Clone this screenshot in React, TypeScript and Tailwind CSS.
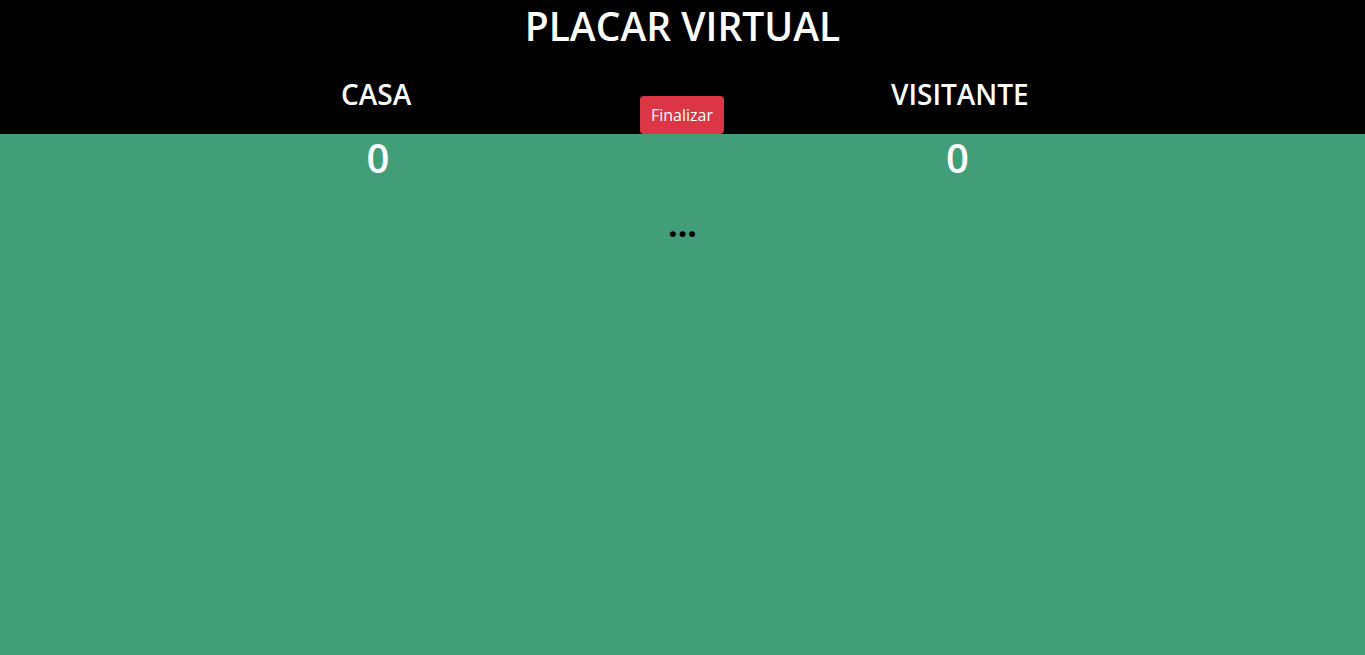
export default function App() {
	return (
		<div
			className="min-h-screen bg-[#429e78] text-white"
			style={{ fontFamily: '"Open Sans", "Noto Sans", sans-serif' }}
		>
			{/* Header */}
			<div className="h-[134px] bg-black">
				<h1 className="text-center text-[39px] font-semibold leading-[51px]">PLACAR VIRTUAL</h1>
				<div className="mt-[26px] flex items-start justify-center">
					<div className="w-[70px] text-center text-[28px] font-semibold leading-[34px]">CASA</div>
					<div className="w-[229px]" />
					<button className="mt-[19px] h-[38px] w-[84px] rounded-[4px] bg-[#dc3545] text-[16px] leading-[24px] text-white">
						Finalizar
					</button>
					<div className="w-[167px]" />
					<div className="w-[133px] text-center text-[28px] font-semibold leading-[34px]">VISITANTE</div>
				</div>
			</div>

			{/* Scores */}
			<div className="flex justify-center">
				<div className="w-[74px] text-center text-[40px] font-semibold leading-[48px]">0</div>
				<div className="w-[225px]" />
				<div className="w-[84px]" />
				<div className="w-[167px]" />
				<div className="w-[133px] text-center text-[40px] font-semibold leading-[48px]">0</div>
			</div>

			<div className="mt-[22px] text-center text-[34px] font-bold leading-[41px] text-black">...</div>
		</div>
	);
}
